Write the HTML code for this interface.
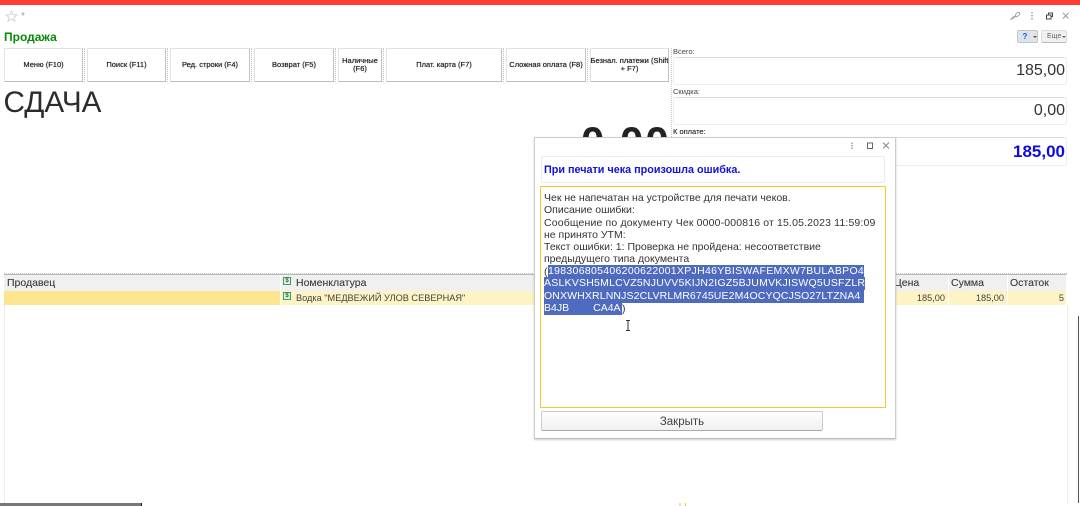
<!DOCTYPE html>
<html lang="ru"><head><meta charset="utf-8"><title>Продажа</title>
<style>
html,body{margin:0;padding:0;width:1080px;height:506px;overflow:hidden;background:#fff}
body{position:relative;font-family:"Liberation Sans",sans-serif;color:#2c2c2c}
div{position:absolute;box-sizing:border-box}
.btn{top:48px;height:34px;border:1px solid #e2e2e2;border-right-color:#c4c4c4;border-bottom:1px solid #bdbdbd;background:#fff;display:flex;align-items:center;justify-content:center;text-align:center;font-size:7.500px;line-height:8px;color:#222;text-shadow:0 0 .6px #333;white-space:nowrap}
.vd{top:48px;height:34px;width:0;border-left:1px dotted #c4c4c4}
.lab{font-size:7.500px;color:#444;left:673px;white-space:nowrap}
.fld{left:673px;width:394px;border:1px solid #eeeeee;border-top:1px solid #dcdcdc;border-radius:3px;background:#fff;text-align:right;padding-right:1px;font-size:16px;color:#333}
.th{top:275px;height:16px;background:#f0f0f0;font-size:10.500px;color:#444;line-height:16px;padding-left:3px;border-right:1px solid #fff;white-space:nowrap;text-shadow:0 0 .4px #666}
.td{top:291px;height:14px;background:#fdf3c4;font-size:9.200px;color:#444;line-height:15px;border-right:1px solid #fff;white-space:nowrap;text-align:right;padding-right:1px}
.ln{left:544px;font-size:10.500px;line-height:12px;color:#333;white-space:nowrap;height:13px}
.sel{background:#4f6bbf;color:#fff;height:13px;left:544px;font-size:10.500px;line-height:13px;white-space:nowrap;overflow:hidden}
.ic{width:8px;height:8px;background:#dff0e3;border:1px solid #3f9f5f;color:#1f6f3f;font-size:6px;line-height:6px;text-align:center;font-weight:bold}
</style></head><body>
<div style="left:0;top:0;width:1080px;height:5px;background:#ff3b36"></div>
<div style="left:1078px;top:316px;width:1px;height:187px;background:#555"></div>

<svg style="position:absolute;left:5px;top:10px" width="13" height="12" viewBox="0 0 13 12"><path d="M6.500 1l1.600 3.500 3.800.4-2.900 2.500.9 3.700-3.400-2-3.400 2 .9-3.700L1.100 4.900l3.800-.4z" fill="none" stroke="#d2d6da"/></svg>
<div style="left:21px;top:11px;font-size:10px;color:#999">*</div>

<svg style="position:absolute;left:1008px;top:10px" width="66" height="12" viewBox="0 0 66 12" fill="none" stroke="#aaa"><path d="M2.500 9.500l3-3h2v-2l2-2h2v2l-2 2h-2l-2 2z"/><path d="M24 2v1.500M24 5v1.500M24 8v1.500" stroke="#888" stroke-width="1.200"/><path d="M38.500 5h4.500v4h-4.500zM40.500 5V3h4v3.500H43" stroke="#444"/><path d="M55 3l5.500 5.500M60.500 3L55 8.500" stroke="#999"/></svg>

<div style="left:4px;top:30px;font-size:12px;font-weight:bold;color:#078a07;line-height:14px">Продажа</div>

<div style="left:1017px;top:30px;width:21px;height:13px;background:#e4e4e4;border:1px solid #c4c4c4;border-radius:2px"></div>
<div style="left:1020px;top:32px;width:10px;height:9px;background:#d5e2f4;color:#2a55c0;font-size:8px;font-weight:bold;line-height:9px;text-align:center">?</div>
<div style="left:1033px;top:36px;width:0;height:0;border:2px solid transparent;border-top:2px solid #555"></div>
<div style="left:1041px;top:30px;width:26px;height:13px;background:#f0f0f0;border:1px solid #ddd;border-bottom-color:#bbb;border-radius:2px;font-size:7px;line-height:11px;color:#666;padding-left:5px">Еще</div>
<div style="left:1062px;top:36px;width:0;height:0;border:2px solid transparent;border-top:2px solid #666"></div>

<div class="btn" style="left:4px;width:79px">Меню (F10)</div>
<div class="btn" style="left:87px;width:79px">Поиск (F11)</div>
<div class="btn" style="left:170px;width:80px">Ред. строки (F4)</div>
<div class="btn" style="left:254px;width:80px">Возврат (F5)</div>
<div class="btn" style="left:338px;width:44px">Наличные<br>(F6)</div>
<div class="btn" style="left:386px;width:116px">Плат. карта (F7)</div>
<div class="btn" style="left:506px;width:80px">Сложная оплата (F8)</div>
<div class="btn" style="left:590px;width:79px">Безнал. платежи (Shift<br>+ F7)</div>
<div class="vd" style="left:84px"></div><div class="vd" style="left:167px"></div><div class="vd" style="left:251px"></div><div class="vd" style="left:335px"></div><div class="vd" style="left:383px"></div><div class="vd" style="left:503px"></div><div class="vd" style="left:587px"></div>
<div style="left:671px;top:48px;width:0;height:225px;border-left:1px dotted #c8c8c8"></div>

<div style="left:3.500px;top:85px;font-size:29.700px;line-height:35px;color:#2c2c2c">СДАЧА</div>
<div style="left:581px;top:118px;font-size:42px;line-height:48px;font-weight:bold;color:#222;letter-spacing:2px">0,00</div>

<div class="lab" style="top:47px">Всего:</div>
<div class="fld" style="top:57px;height:28px;line-height:26px">185,00</div>
<div class="lab" style="top:87px">Скидка:</div>
<div class="fld" style="top:97px;height:28px;line-height:26px">0,00</div>
<div class="lab" style="top:127px;color:#333;text-shadow:0 0 .4px #333">К оплате:</div>
<div class="fld" style="top:137px;height:29px;line-height:28px;color:#0c0ce0;font-weight:bold;font-size:17px">185,00</div>

<div style="left:4px;top:273px;width:1063px;height:0;border-top:1px dotted #c8c8c8"></div>
<div style="left:4px;top:274px;width:1063px;height:1px;background:#b8b8b8"></div>
<div class="th" style="left:4px;width:277px">Продавец</div>
<div class="th" style="left:281px;width:612px;padding-left:15px">Номенклатура</div>
<div class="th" style="left:893px;width:56px;padding-left:1px">Цена</div>
<div class="th" style="left:949px;width:59px;padding-left:2px">Сумма</div>
<div class="th" style="left:1008px;width:59px;padding-left:2px">Остаток</div>
<div class="ic" style="left:283px;top:277px">$</div>
<div class="td" style="left:4px;width:277px;background:#fde68f"></div>
<div class="td" style="left:281px;width:612px;text-align:left;padding-left:15px">Водка "МЕДВЕЖИЙ УЛОВ СЕВЕРНАЯ"</div>
<div class="ic" style="left:283px;top:292px">$</div>
<div class="td" style="left:893px;width:56px;padding-right:3px">185,00</div>
<div class="td" style="left:949px;width:59px;padding-right:3px">185,00</div>
<div class="td" style="left:1008px;width:59px;padding-right:2px">5</div>
<div style="left:4px;top:305px;width:1px;height:198px;background:#efefef"></div>
<div style="left:1067px;top:305px;width:1px;height:198px;background:#efefef"></div>

<div style="left:534px;top:137px;width:362px;height:302px;background:#fff;border:1px solid #ccc;border-bottom:1px solid #bbb;box-shadow:0 1px 2px rgba(0,0,0,.2)"></div>
<svg style="position:absolute;left:848px;top:141px" width="44" height="10" viewBox="0 0 44 10" fill="none"><path d="M4 1.500v1.500M4 4v1.500M4 6.500V8" stroke="#888" stroke-width="1.200"/><path d="M19.500 2h5v5.500h-5z" stroke="#666"/><path d="M35 1.500l6 6M41 1.500l-6 6" stroke="#888"/></svg>
<div style="left:541px;top:156px;width:344px;height:27px;border:1px solid #ececec;border-radius:2px;font-size:10.800px;font-weight:bold;color:#1212d8;line-height:26px;padding-left:2px;white-space:nowrap">При печати чека произошла ошибка.</div>
<div style="left:540px;top:186px;width:346px;height:222px;border:1px solid #f2c92f;background:#fff"></div>

<div class="ln" style="top:192px">Чек не напечатан на устройстве для печати чеков.</div>
<div class="ln" style="top:204px">Описание ошибки:</div>
<div class="ln" style="top:217px;letter-spacing:.15px">Сообщение по документу Чек 0000-000816 от 15.05.2023 11:59:09</div>
<div class="ln" style="top:229px">не принято УТМ:</div>
<div class="ln" style="top:241px">Текст ошибки: 1: Проверка не пройдена: несоответствие</div>
<div class="ln" style="top:253px">предыдущего типа документа</div>
<div class="ln" style="top:266px">(</div>
<div class="sel" style="left:548px;top:265px;width:316px;letter-spacing:.3px">198306805406200622001XPJH46YBISWAFEMXW7BULABPO4</div>
<div class="sel" style="top:277px;width:321px;letter-spacing:.23px">ASLKVSH5MLCVZ5NJUVV5KIJN2IGZ5BJUMVKJISWQ5USFZLR</div>
<div class="sel" style="top:290px;width:320px;letter-spacing:.13px">ONXWHXRLNNJS2CLVRLMR6745UE2M4OCYQCJSO27LTZNA4</div>
<div class="sel" style="top:302px;width:78px">B4JB<span style="display:inline-block;width:24px"></span>CA4A</div>
<div class="ln" style="left:622px;top:303px">)</div>
<svg style="position:absolute;left:625px;top:320px" width="6" height="11" viewBox="0 0 6 11" fill="none" stroke="#333"><path d="M1 .5h4M3 .5v9.500M1 10.500h4"/></svg>

<div style="left:541px;top:411px;width:282px;height:20px;border:1px solid #ccc;border-bottom-color:#aaa;border-radius:2px;background:linear-gradient(#fff,#f0f0f0);text-align:center;font-size:11.500px;line-height:20px;color:#444">Закрыть</div>

<div style="left:0;top:503px;width:142px;height:3px;background:#777"></div>
<div style="left:141px;top:503px;width:1px;height:3px;background:#222"></div>
<div style="left:679px;top:503px;width:2px;height:3px;background:#ddd"></div>
<div style="left:685px;top:503px;width:1px;height:3px;background:#f2c92f"></div>
</body></html>
